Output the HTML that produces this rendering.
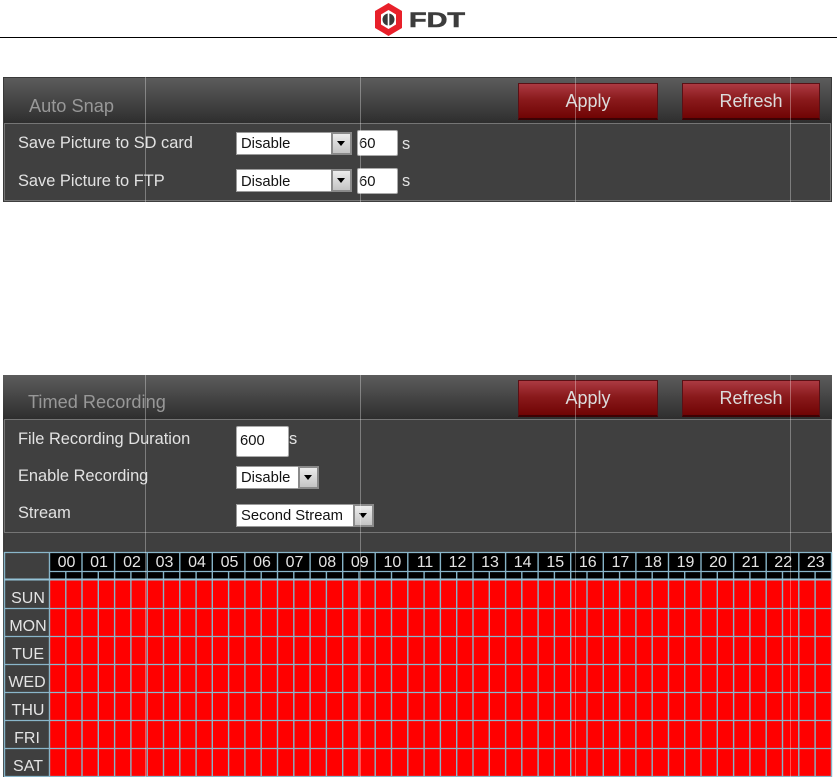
<!DOCTYPE html>
<html><head><meta charset="utf-8">
<style>
html,body{margin:0;padding:0;background:#fff;width:837px;height:777px;overflow:hidden;font-family:"Liberation Sans",Arial,sans-serif}
div,span{position:absolute;box-sizing:border-box}
.panel{background:#3f3f3f;left:3px;width:830px}
.head{left:0;top:0;width:829px;background:linear-gradient(#5c5c5c,#2d2d2d)}
.inner{left:1px;border:1px solid #757575;background:#404040}
.title{color:#989898;font-size:18.2px;white-space:nowrap;line-height:22px}
.lbl{color:#e2e2e2;font-size:16.4px;white-space:nowrap;line-height:20px}
.btn{height:37px;background:linear-gradient(#ac3a42,#8a1a1c 45%,#700404);border:1px solid #5a1015;border-bottom:2px solid #3c0204;color:#dcdcdc;font-size:18px;line-height:35px;text-align:center}
.sel{background:#fff;border:1px solid #9a9a9a;height:23px;color:#111;font-size:14.8px;line-height:22px;padding-left:4px;white-space:nowrap}
.arr{top:-1px;right:-1px;width:21px;height:23px;background:linear-gradient(#ececec,#c4c4c4);border:2px solid #8a8a8a}
.arr:after{content:"";position:absolute;left:4px;top:7px;border:4.5px solid transparent;border-top:5px solid #000;border-bottom:0}
.inp{background:#fff;border:1px solid #aaa;border-radius:2px;color:#111;font-size:14.8px;line-height:27px;padding-left:1px}
.v{width:1px;background:rgba(255,255,255,.32);z-index:5}
</style></head><body>

<svg style="position:absolute;left:0;top:0" width="837" height="40">
<polygon points="388.5,3 402,11 402,28 388.5,36 375,28 375,11" fill="#e8202a"/>
<polygon points="388.5,10 396,14.5 396,24.5 388.5,29 381,24.5 381,14.5" fill="#fff"/>
<circle cx="388.5" cy="19.5" r="6" fill="#3a3a3a"/>
<rect x="387.7" y="13" width="1.6" height="13" fill="#fff"/>
<text x="409" y="27" font-family="Liberation Sans" font-weight="bold" font-size="21" fill="#3c3c3c" stroke="#3c3c3c" stroke-width=".6" textLength="56" lengthAdjust="spacingAndGlyphs">FDT</text>
<rect x="0" y="37" width="837" height="1" fill="#000"/>
</svg>

<!-- Auto Snap -->
<div class="panel" style="top:77px;height:125px;width:829px;border:1px solid #3a3a3a;border-bottom:0">
  <div class="head" style="height:46px;width:827px"></div>
  <div class="inner" style="top:45px;height:78px;width:827px;left:0"></div>
</div>
<div class="title" style="left:29px;top:95px">Auto Snap</div>
<div class="btn" style="left:518px;top:83px;width:140px">Apply</div>
<div class="btn" style="left:682px;top:83px;width:138px">Refresh</div>
<div class="lbl" style="left:18px;top:133px">Save Picture to SD card</div>
<div class="lbl" style="left:18px;top:171px">Save Picture to FTP</div>
<div class="sel" style="left:236px;top:132px;width:116px">Disable<span class="arr"></span></div>
<div class="inp" style="left:357px;top:130px;width:41px;height:26px">60</div>
<div class="lbl" style="left:402px;top:134px">s</div>
<div class="sel" style="left:236px;top:169px;width:116px;line-height:24px">Disable<span class="arr"></span></div>
<div class="inp" style="left:357px;top:168px;width:41px;height:26px">60</div>
<div class="lbl" style="left:402px;top:171px">s</div>

<!-- Timed Recording -->
<div class="panel" style="top:375px;height:402px;width:829px;background:#3f3f3f">
  <div class="head" style="height:45px"></div>
  <div class="inner" style="top:44px;height:114px;width:828px;left:1px"></div>
</div>
<div class="title" style="left:28px;top:391px">Timed Recording</div>
<div class="btn" style="left:518px;top:380px;width:140px">Apply</div>
<div class="btn" style="left:682px;top:380px;width:138px">Refresh</div>
<div class="lbl" style="left:18px;top:429px">File Recording Duration</div>
<div class="lbl" style="left:18px;top:466px">Enable Recording</div>
<div class="lbl" style="left:18px;top:503px">Stream</div>
<div class="inp" style="left:236px;top:426px;width:53px;height:31px;padding-left:3px;line-height:28px">600</div>
<div class="lbl" style="left:289px;top:429px">s</div>
<div class="sel" style="left:236px;top:466px;width:83px">Disable<span class="arr"></span></div>
<div class="sel" style="left:236px;top:504px;width:138px">Second Stream<span class="arr"></span></div>

<!-- Grid -->
<svg style="position:absolute;left:0;top:0" width="837" height="777">
<rect x="49" y="552" width="783" height="27" fill="#000"/>
<rect x="49" y="580" width="783" height="197" fill="#f00"/>
<path d="M4.5 552V777M49.5 552V777M82 552V777M114.6 552V777M147.2 552V777M179.8 552V777M212.3 552V777M244.9 552V777M277.5 552V777M310.1 552V777M342.7 552V777M375.2 552V777M407.8 552V777M440.4 552V777M473 552V777M505.6 552V777M538.1 552V777M570.7 552V777M603.3 552V777M635.9 552V777M668.5 552V777M701 552V777M733.6 552V777M766.2 552V777M798.8 552V777M831.5 552V777M65.8 571V777M98.3 571V777M130.9 571V777M163.5 571V777M196.1 571V777M228.6 571V777M261.2 571V777M293.8 571V777M326.4 571V777M359 571V777M391.5 571V777M424.1 571V777M456.7 571V777M489.3 571V777M521.8 571V777M554.4 571V777M587 571V777M619.6 571V777M652.2 571V777M684.7 571V777M717.3 571V777M749.9 571V777M782.5 571V777M815.1 571V777" stroke="#86b4c8" stroke-width="1.4" fill="none"/>
<path d="M4 552.5H832M49 571.5H832M4 608.5H832M4 636.5H832M4 664.5H832M4 692.5H832M4 720.5H832M4 748.5H832M4 776.5H832" stroke="#8ab6ca" stroke-width="1.2" fill="none"/>
<path d="M4 579.5H832" stroke="#96c4d8" stroke-width="2" fill="none"/>
<g font-family="Liberation Sans" font-size="16" fill="#e4e4e4" text-anchor="middle">
<text x="66.5" y="567">00</text><text x="99" y="567">01</text><text x="132" y="567">02</text><text x="164.5" y="567">03</text><text x="197" y="567">04</text><text x="229.5" y="567">05</text><text x="262" y="567">06</text><text x="294.5" y="567">07</text><text x="327.3" y="567">08</text><text x="359.8" y="567">09</text><text x="392.4" y="567">10</text><text x="425" y="567">11</text><text x="457.5" y="567">12</text><text x="490" y="567">13</text><text x="522.6" y="567">14</text><text x="555.3" y="567">15</text><text x="587.8" y="567">16</text><text x="620.4" y="567">17</text><text x="653" y="567">18</text><text x="685.5" y="567">19</text><text x="718" y="567">20</text><text x="750.6" y="567">21</text><text x="783.2" y="567">22</text><text x="815.8" y="567">23</text>
<text x="28" y="603">SUN</text><text x="28" y="631">MON</text><text x="28" y="659">TUE</text><text x="27" y="687">WED</text><text x="28" y="715">THU</text><text x="27" y="743">FRI</text><text x="28" y="771">SAT</text>
</g>
</svg>

<!-- overlay lines -->
<div class="v" style="left:145px;top:77px;height:125px"></div>
<div class="v" style="left:360px;top:77px;height:125px"></div>
<div class="v" style="left:575px;top:77px;height:125px"></div>
<div class="v" style="left:790px;top:77px;height:125px"></div>
<div class="v" style="left:145px;top:375px;height:402px"></div>
<div class="v" style="left:360px;top:375px;height:402px"></div>
<div class="v" style="left:575px;top:375px;height:402px"></div>
<div class="v" style="left:790px;top:375px;height:402px"></div>
</body></html>
